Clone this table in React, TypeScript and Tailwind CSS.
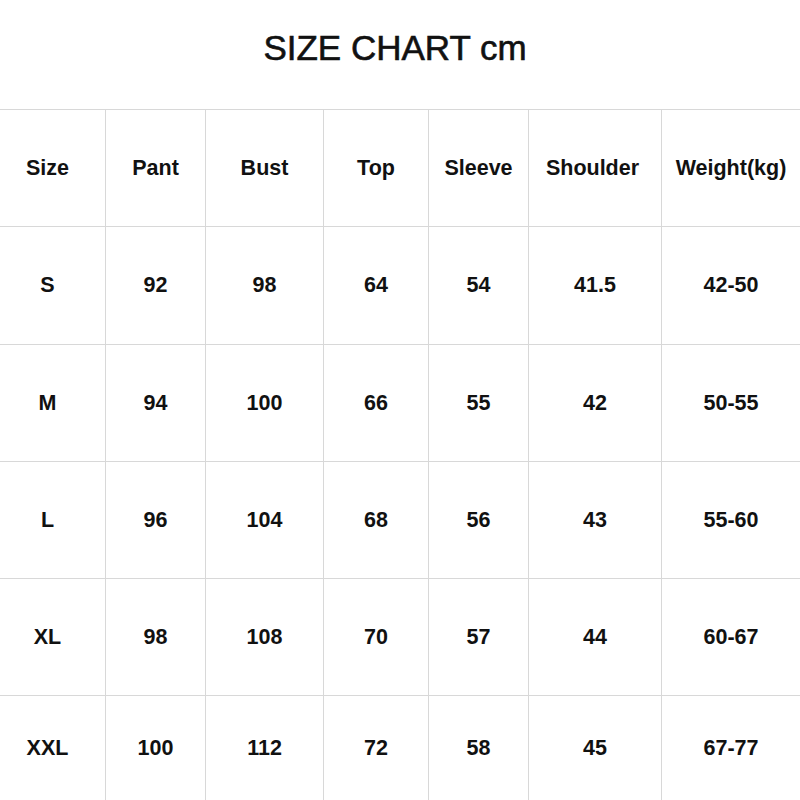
const headers = ['Size', 'Pant', 'Bust', 'Top', 'Sleeve', 'Shoulder', 'Weight(kg)'];

const rows = [
    ['S', '92', '98', '64', '54', '41.5', '42-50'],
    ['M', '94', '100', '66', '55', '42', '50-55'],
    ['L', '96', '104', '68', '56', '43', '55-60'],
    ['XL', '98', '108', '70', '57', '44', '60-67'],
    ['XXL', '100', '112', '72', '58', '45', '67-77'],
];

const rowHeights = ['h-[117px]', 'h-[118px]', 'h-[117px]', 'h-[117px]', 'h-[117px]', 'h-[105px]'];

function Row({ cells, height, header }: { cells: string[]; height: string; header?: boolean }) {
    return (
        <div className={`grid grid-cols-[105px_100px_118px_105px_100px_133px_139px] border-t border-[#d8d8d8] ${height}`}>
            {cells.map((c, i) => (
                <div
                    key={i}
                    className={`flex items-center justify-center ${i > 0 ? 'border-l border-[#d8d8d8]' : 'pr-[10px]'} ${header && i === 5 ? 'pr-[5px]' : ''}`}
                >
                    {c}
                </div>
            ))}
        </div>
    );
}

export default function App() {
    return (
        <div
            className="w-[800px] h-[800px] overflow-hidden bg-white text-[#111]"
            style={{ fontFamily: '"Liberation Sans", Arial, sans-serif' }}
        >
            <div className="h-[109px] flex items-start justify-center pt-[27px] pr-[10px]">
                <h1 className="text-[35px] leading-[42px] font-normal [-webkit-text-stroke:0.6px_#111]">SIZE CHART cm</h1>
            </div>
            <div className="text-[21.5px] font-bold">
                <Row cells={headers} height={rowHeights[0]} header />
                {rows.map((r, i) => (
                    <Row key={r[0]} cells={r} height={rowHeights[i + 1]} />
                ))}
            </div>
        </div>
    );
}
